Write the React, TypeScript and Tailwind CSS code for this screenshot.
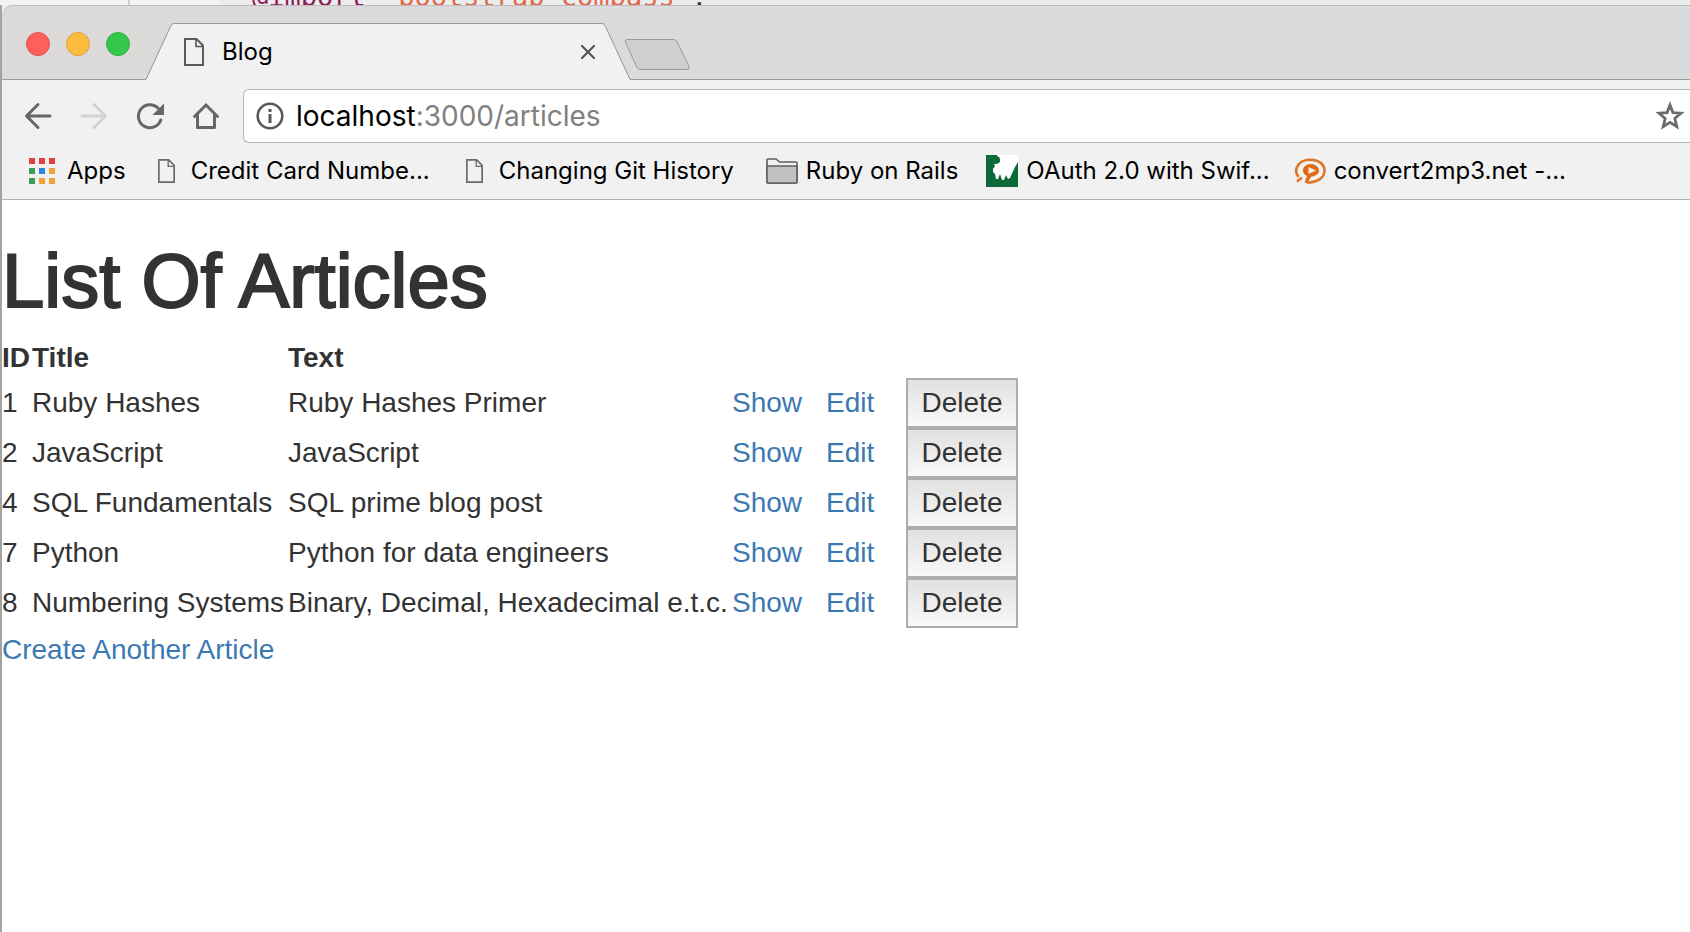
import React from 'react';

const articles = [
  { id: 1, title: 'Ruby Hashes', text: 'Ruby Hashes Primer' },
  { id: 2, title: 'JavaScript', text: 'JavaScript' },
  { id: 4, title: 'SQL Fundamentals', text: 'SQL prime blog post' },
  { id: 7, title: 'Python', text: 'Python for data engineers' },
  { id: 8, title: 'Numbering Systems', text: 'Binary, Decimal, Hexadecimal e.t.c.' },
];

function PageIcon({ className }: { className: string }) {
  return (
    <svg viewBox="0 0 20 28" className={className} fill="none" stroke="currentColor" strokeWidth="2" aria-hidden="true">
      <path d="M1 1H12.5L19 7.5V27H1Z" />
      <path d="M12 1V8.5H19" strokeWidth="1.6" />
    </svg>
  );
}

function AppsIcon() {
  const cells = ['#e0403f', '#e0403f', '#e0403f', '#3f9a60', '#2f86e5', '#e9a336', '#3f9a60', '#e9a336', '#e9a336'];
  return (
    <svg viewBox="0 0 26 26" className="h-[26px] w-[26px]" aria-hidden="true">
      {cells.map((fill, i) => (
        <rect key={i} x={(i % 3) * 10} y={Math.floor(i / 3) * 10} width="6" height="6" fill={fill} />
      ))}
    </svg>
  );
}

function FolderIcon() {
  return (
    <svg viewBox="0 0 32 26" className="h-[26px] w-8" stroke="#5f5f5f" strokeWidth="1.6" strokeLinejoin="round" aria-hidden="true">
      <path d="M1 24V2Q1 1 2 1H10L13.5 4H30Q31 4 31 5V24Q31 25 30 25H2Q1 25 1 24Z" fill="#f1f1f1" />
      <path d="M1 8H31V24Q31 25 30 25H2Q1 25 1 24Z" fill="#c1c1c1" />
    </svg>
  );
}

function WolfIcon() {
  return (
    <svg viewBox="0 0 32 32" className="h-8 w-8" aria-hidden="true">
      <rect width="32" height="32" fill="#0a6a38" />
      <path d="M11 0H32V7L29 12L24 23L22 24L20 20L18 25H16L14 19L12 24H10L9 19L7 17V14L9 11L8 9L11 9L14 7V4L13 2L11 1Z" fill="#fff" />
    </svg>
  );
}

function ConvertIcon() {
  return (
    <svg viewBox="0 0 32 27" className="h-[27px] w-8" fill="none" aria-hidden="true">
      <path d="M4.500 19C-1 12 4 1.800 16 1.800C25 1.800 30.500 6.500 30.500 12.500C30.500 19.500 24 24.500 13 24.500" stroke="#e0762a" strokeWidth="2.600" />
      <path d="M3 23.500L8 19.500" stroke="#e0762a" strokeWidth="2.400" />
      <path d="M16.500 6C21.500 6 25 9 25 12.500C25 16 21 18.500 17.500 18.500L13 25L10.500 24.500L13 18C10.500 17 9 15 9 12.500C9 9 12 6 16.500 6Z" fill="#e06a14" />
      <path d="M14.500 9L22 12.500L14.500 16Z" fill="#f4f0ee" />
    </svg>
  );
}

function Bookmark({ icon, label, className }: { icon: React.ReactNode; label: string; className: string }) {
  return (
    <a href="#" className={`flex shrink-0 items-center whitespace-nowrap ${className}`}>
      {icon}
      <span>{label}</span>
    </a>
  );
}

function TabStrip() {
  return (
    <div className="flex h-[75px] items-end rounded-tl-[10px] border-t border-[#bdbdbe] bg-gradient-to-r from-[#dcd9d9] from-25% to-[#dadbdd] to-40%">
      <div className="flex h-full w-[144px] shrink-0 items-start gap-4 border-b border-[#9b9999] pt-[26px] pl-6">
        <button aria-label="Close window" className="h-6 w-6 rounded-full border border-[#e2504c] bg-[#fc605c]" />
        <button aria-label="Minimize window" className="h-6 w-6 rounded-full border border-[#dfa133] bg-[#fdbc40]" />
        <button aria-label="Zoom window" className="h-6 w-6 rounded-full border border-[#2cae3d] bg-[#34c84a]" />
      </div>
      <svg viewBox="0 0 28 57" className="h-[57px] w-7 shrink-0" aria-hidden="true">
        <path d="M0 57V56.500L25 2.500Q26 .500 28 .500V57Z" fill="#f1f1f1" />
        <path d="M0 56.500L25 2.500Q26 .500 28 .500" fill="none" stroke="#969494" />
      </svg>
      <div className="flex h-[57px] w-[428px] shrink-0 items-center border-t border-[#9b9999] bg-[#f1f1f1] pl-[10px] pr-[6px]">
        <PageIcon className="h-7 w-5 text-[#5b5b5b]" />
        <span className="flex-1 pl-[18px] text-2xl text-black">Blog</span>
        <button aria-label="Close tab" className="text-[#555]">
          <svg viewBox="0 0 16 16" className="h-4 w-4" stroke="currentColor" strokeWidth="2.200" strokeLinecap="round" aria-hidden="true">
            <path d="M2 2L14 14M14 2L2 14" />
          </svg>
        </button>
      </div>
      <svg viewBox="0 0 28 57" className="h-[57px] w-7 shrink-0" aria-hidden="true">
        <path d="M28 57V56.500L3 2.500Q2 .500 0 .500V57Z" fill="#f1f1f1" />
        <path d="M28 56.500L3 2.500Q2 .500 0 .500" fill="none" stroke="#969494" />
      </svg>
      <div className="flex h-[57px] flex-1 items-start border-b border-[#9b9b9c] pt-4">
        <button aria-label="New tab" className="-ml-1.5">
          <svg viewBox="0 0 66 31" className="h-[31px] w-[66px]" aria-hidden="true">
            <path d="M3 .500H49Q52 .500 53 2.500L65 27.500Q66 30.500 63 30.500H17Q14 30.500 13 28.500L1.500 3.500Q.500 .500 3 .500Z" fill="#cfcfcf" stroke="#9a9a9a" />
          </svg>
        </button>
      </div>
    </div>
  );
}

function Toolbar() {
  return (
    <div className="flex h-[71px] items-center">
      <div className="flex w-[241px] shrink-0 items-center pl-[22px] text-[#666]">
        <button aria-label="Back">
          <svg viewBox="0 0 28 28" className="h-7 w-7" fill="none" stroke="currentColor" strokeWidth="3" strokeLinecap="round" strokeLinejoin="round" aria-hidden="true">
            <path d="M26 14H3M14 2.500L2.500 14L14 25.500" />
          </svg>
        </button>
        <button aria-label="Forward" className="ml-7 text-[#d3d3d3]">
          <svg viewBox="0 0 28 28" className="h-7 w-7" fill="none" stroke="currentColor" strokeWidth="3" strokeLinecap="round" strokeLinejoin="round" aria-hidden="true">
            <path d="M2 14H25M14 2.500L25.500 14L14 25.500" />
          </svg>
        </button>
        <button aria-label="Reload" className="ml-7">
          <svg viewBox="0 0 28 28" className="h-7 w-7" fill="none" aria-hidden="true">
            <path d="M24.800 18A11.500 11.500 0 1 1 22 6" stroke="currentColor" strokeWidth="3" strokeLinecap="round" />
            <path d="M28 1.500V13H16.500Z" fill="currentColor" />
          </svg>
        </button>
        <button aria-label="Home" className="ml-7">
          <svg viewBox="0 0 28 28" className="h-7 w-7" fill="none" stroke="currentColor" strokeWidth="3" strokeLinecap="round" aria-hidden="true">
            <path d="M2.500 14.500L14 3L25.500 14.500" />
            <path d="M5.500 13V25.500H22.500V13" strokeLinejoin="round" />
          </svg>
        </button>
      </div>
      <div className="flex h-[54px] flex-1 items-center rounded-l-[6px] border border-r-0 border-[#b4b4b4] bg-white pr-[5px] pl-3">
        <svg viewBox="0 0 28 28" className="h-7 w-7 shrink-0 text-[#5a5a5a]" fill="none" aria-hidden="true">
          <circle cx="14" cy="14" r="12.300" stroke="currentColor" strokeWidth="2.600" />
          <path d="M12.500 7H15.500V10H12.500ZM12.500 12H15.500V21H12.500Z" fill="currentColor" />
        </svg>
        <div className="flex-1 pl-3 text-[28px] leading-9 text-[#808080]">
          <span className="text-black">localhost</span>:3000/articles
        </div>
        <button aria-label="Bookmark this page" className="text-[#6b6b6b]">
          <svg viewBox="0 0 30 30" className="h-[30px] w-[30px]" fill="none" stroke="currentColor" strokeWidth="2.800" aria-hidden="true">
            <path d="M15 4L17.900 11.600L26 12.200L19.800 17.400L21.800 25.800L15 21.400L8.200 25.800L10.200 17.400L4 12.200L12.100 11.600Z" />
          </svg>
        </button>
      </div>
    </div>
  );
}

function BookmarksBar() {
  return (
    <nav className="flex h-12 items-start overflow-hidden pt-1 pl-[27px] text-2xl text-black">
      <Bookmark className="gap-3" icon={<AppsIcon />} label="Apps" />
      <Bookmark className="ml-8 gap-4" icon={<PageIcon className="h-6 w-[17px] text-[#6b6b6b]" />} label="Credit Card Numbe..." />
      <Bookmark className="ml-9 gap-4" icon={<PageIcon className="h-6 w-[17px] text-[#6b6b6b]" />} label="Changing Git History" />
      <Bookmark className="ml-8 gap-2" icon={<FolderIcon />} label="Ruby on Rails" />
      <Bookmark className="ml-7 gap-2" icon={<WolfIcon />} label="OAuth 2.0 with Swif..." />
      <Bookmark className="ml-6 gap-2" icon={<ConvertIcon />} label="convert2mp3.net -..." />
    </nav>
  );
}

function Articles() {
  return (
    <main className="flex-1 bg-white font-['Liberation_Sans',sans-serif] text-[28px] leading-10 text-[#333]">
      <h1 className="pt-10 pb-4 text-[76px] leading-[82px] [-webkit-text-stroke:2px_#333]">List Of Articles</h1>
      <table className="w-[1016px] table-fixed border-collapse whitespace-nowrap">
        <colgroup>
          <col className="w-[30px]" />
          <col className="w-[256px]" />
          <col className="w-[444px]" />
          <col className="w-[94px]" />
          <col className="w-[80px]" />
          <col className="w-[112px]" />
        </colgroup>
        <thead>
          <tr className="text-left">
            <th className="p-0">ID</th>
            <th className="p-0">Title</th>
            <th className="p-0">Text</th>
            <td colSpan={3} />
          </tr>
        </thead>
        <tbody>
          {articles.map((a) => (
            <tr key={a.id} className="h-[50px]">
              <td className="p-0">{a.id}</td>
              <td className="p-0">{a.title}</td>
              <td className="p-0">{a.text}</td>
              <td className="p-0"><a href="#" className="text-[#3c79b2]">Show</a></td>
              <td className="p-0"><a href="#" className="text-[#3c79b2]">Edit</a></td>
              <td className="p-0">
                <button className="block h-[50px] w-full border-2 border-[#adadad] bg-gradient-to-b from-[#e1e1e1] to-[#f8f8f8] text-center">Delete</button>
              </td>
            </tr>
          ))}
        </tbody>
      </table>
      <a href="#" className="inline-block pt-0.5 text-[#3c79b2]">Create Another Article</a>
    </main>
  );
}

export default function App() {
  return (
    <div className="flex min-h-screen flex-col overflow-hidden bg-[#f3f3f4] font-['Inter',sans-serif]">
      <div className="flex h-[5px] overflow-hidden" aria-hidden="true">
        <div className="w-[130px] border-r-2 border-[#cfcfd0]" />
        <div className="w-[90px]" />
        <div className="flex flex-1 items-end whitespace-pre bg-[#ebecee] pl-8 font-['DejaVu_Sans_Mono',monospace] text-[27px] leading-4">
          <span className="text-[#8f1d58]">@import </span>
          <span className="text-[#df6a4b]">"bootstrap-compass"</span>
          <span className="text-[#333]">;</span>
        </div>
      </div>
      <div className="flex flex-1 flex-col border-l-2 border-[#a3a3a3]">
        <TabStrip />
        <div className="border-b border-[#b3b3b3] bg-[#f1f1f1]">
          <Toolbar />
          <BookmarksBar />
        </div>
        <Articles />
      </div>
    </div>
  );
}
